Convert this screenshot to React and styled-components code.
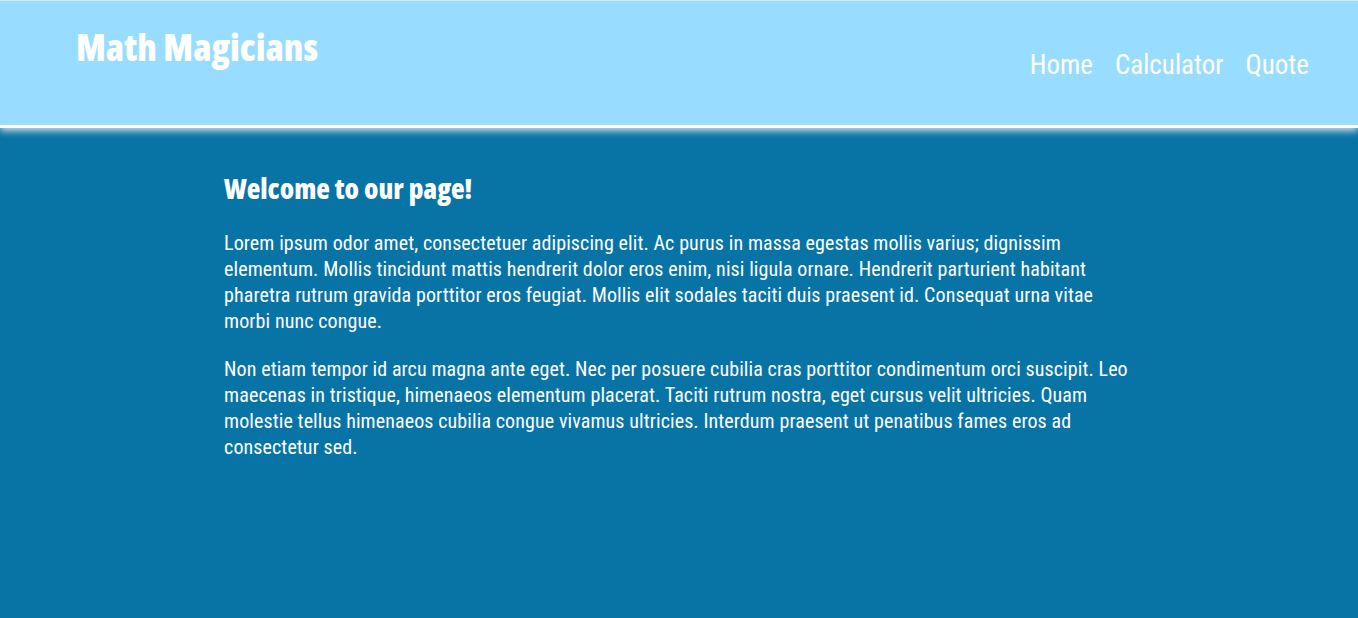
import React from 'react';
import styled, { createGlobalStyle } from 'styled-components';

const GlobalStyle = createGlobalStyle`
  html, body {
    margin: 0;
    padding: 0;
    height: 100%;
  }
  body {
    font-family: 'Roboto', 'Open Sans', sans-serif;
    font-stretch: 75%;
    background: #0874a6;
    border-top: 1px solid #e2e2e2;
    box-sizing: border-box;
  }
`;

const links = ['Home', 'Calculator', 'Quote'];

const App = () => (
  <>
    <GlobalStyle />
    <Page>
      <Header>
        <Logo>Math Magicians</Logo>
        <Nav>
          {links.map((link) => (
            <NavLink key={link} href="#">
              {link}
            </NavLink>
          ))}
        </Nav>
      </Header>
      <Main>
        <Title>Welcome to our page!</Title>
        <Text>
          Lorem ipsum odor amet, consectetuer adipiscing elit. Ac purus in massa egestas mollis varius; dignissim
          elementum. Mollis tincidunt mattis hendrerit dolor eros enim, nisi ligula ornare. Hendrerit parturient habitant
          pharetra rutrum gravida porttitor eros feugiat. Mollis elit sodales taciti duis praesent id. Consequat urna vitae
          morbi nunc congue.
        </Text>
        <Text>
          Non etiam tempor id arcu magna ante eget. Nec per posuere cubilia cras porttitor condimentum orci suscipit. Leo
          maecenas in tristique, himenaeos elementum placerat. Taciti rutrum nostra, eget cursus velit ultricies. Quam
          molestie tellus himenaeos cubilia congue vivamus ultricies. Interdum praesent ut penatibus fames eros ad
          consectetur sed.
        </Text>
      </Main>
    </Page>
  </>
);

export default App;

const Page = styled.div`
  display: flex;
  flex-direction: column;
  color: #fff;
`;

const Header = styled.header`
  display: flex;
  justify-content: space-between;
  align-items: flex-start;
  height: 124px;
  padding: 0 49px 0 76px;
  background: #98ddff;
  border-bottom: 3px solid #fff;
  box-shadow: 0 3px 7px rgba(225, 235, 240, 0.9);
  position: relative;
  z-index: 1;
`;

const Logo = styled.h1`
  margin: 22px 0 0;
  font-family: 'Open Sans', 'Roboto', sans-serif;
  font-stretch: 75%;
  font-size: 37px;
  line-height: 48px;
  font-weight: 800;
`;

const Nav = styled.nav`
  display: flex;
  gap: 22px;
  margin-top: 45px;
`;

const NavLink = styled.a`
  color: #fff;
  text-decoration: none;
  font-size: 27px;
  line-height: 38px;
`;

const Main = styled.main`
  width: 67%;
  margin: 0 auto;
  padding-top: 42px;
`;

const Title = styled.h2`
  margin: 0 0 24px;
  font-family: 'Open Sans', 'Roboto', sans-serif;
  font-stretch: 75%;
  font-size: 28px;
  line-height: 36px;
  font-weight: 800;
`;

const Text = styled.p`
  margin: 0 0 22px;
  font-size: 20px;
  line-height: 26px;
  letter-spacing: 0.1px;
`;
